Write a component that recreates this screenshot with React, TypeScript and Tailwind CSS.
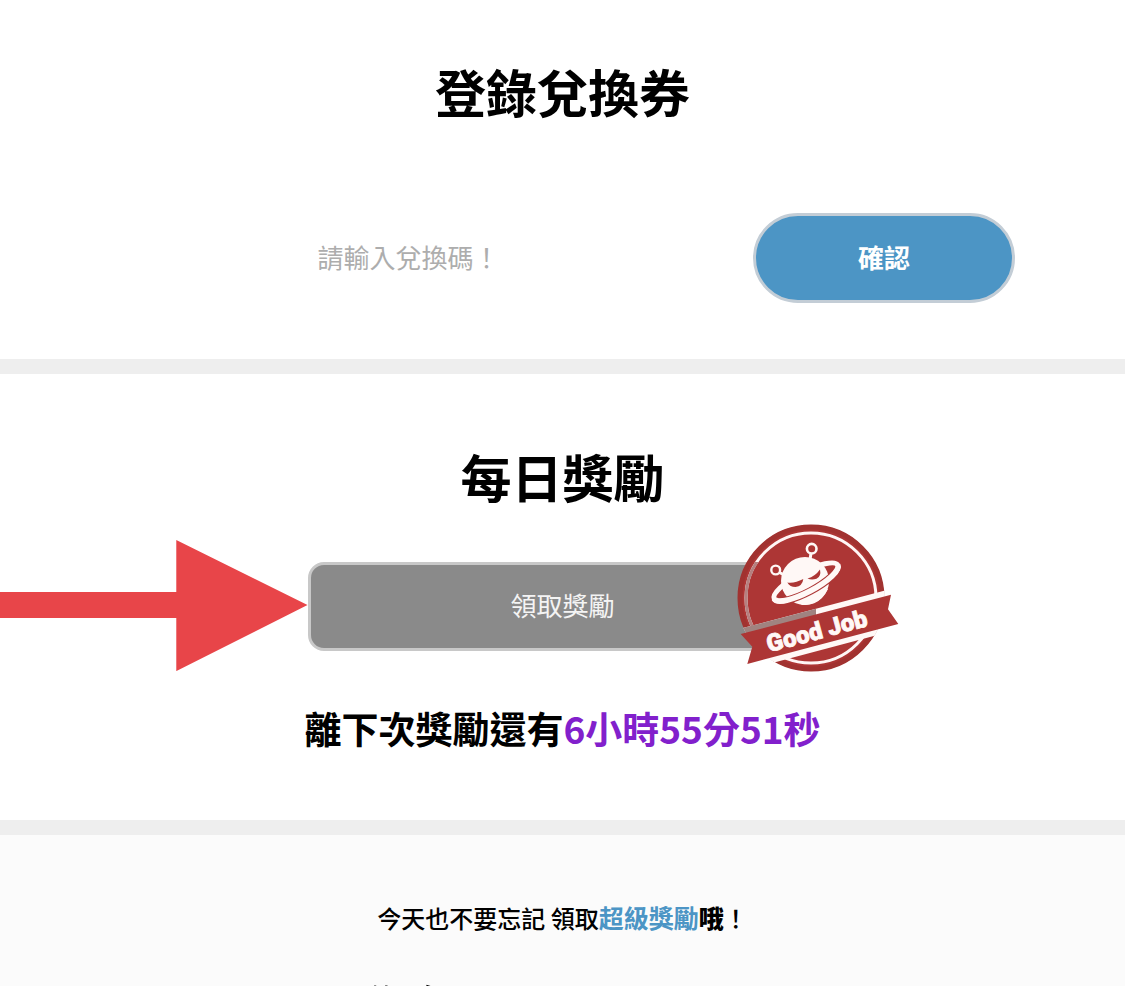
const heading = "text-[51px] leading-[76px] font-bold";

function ArrowMark() {
  return (
    <svg
      viewBox="0 0 307 132"
      preserveAspectRatio="xMaxYMid slice"
      className="h-[132px] w-full"
      fill="#e84549"
      aria-hidden="true"
    >
      <path d="M0 53H176V1L307 66L176 132V79H0Z" />
    </svg>
  );
}

function GoodJobBadge() {
  return (
    <svg
      viewBox="0 0 162 148"
      className="h-[148px] w-[162px]"
      role="img"
      aria-label="Good Job"
    >
      <defs>
        <clipPath id="disc">
          <circle cx="74" cy="74" r="74" />
        </clipPath>
        <clipPath id="overlap">
          <rect x="0" y="38" width="79" height="88" />
        </clipPath>
      </defs>
      <circle cx="74" cy="74" r="73" fill="#ad3635" />
      <circle cx="74" cy="74" r="71" fill="none" stroke="#a13230" strokeWidth="5" />
      <circle cx="74" cy="74" r="65" fill="none" stroke="#fff6f5" strokeWidth="3" />
      <g clipPath="url(#disc)">
        <path d="M0 105.6L162 62.8V105.4L0 148.3Z" fill="#fff8f6" />
        <g clipPath="url(#overlap)">
          <circle cx="74" cy="74" r="65" fill="none" stroke="#b58180" strokeWidth="3" />
          <path d="M0 105.6L162 62.8V75L0 118Z" fill="#a08380" />
        </g>
      </g>
      <path d="M3.7 110L154 70.7L151 85.3L161.3 100L10.3 140L15.3 122.7Z" fill="#ad3635" />

      {/* robot head with its ring */}
      <g stroke="#fff8f6" fill="none">
        <circle cx="38.7" cy="46" r="4.4" strokeWidth="2.4" />
        <circle cx="74.7" cy="24.7" r="4.8" strokeWidth="2.6" />
        <path d="M42.5 48.5L49 52M74 29L73 36" strokeWidth="3" />
        <ellipse
          cx="69"
          cy="58"
          rx="36"
          ry="10"
          strokeWidth="5"
          transform="rotate(-28 69 58)"
        />
      </g>
      <circle cx="68" cy="57" r="24" fill="#fff8f6" />
      <path d="M64 81Q82 82 91 65L80 62Z" fill="#fff8f6" />
      <path d="M50.3 58.5Q58 59.5 66.3 55Q65.5 62 58.5 63Q53 63 50.3 58.5Z" fill="#ad3635" />
      <path d="M70.5 54.5Q78 52.5 83 45.5Q84.5 52.5 79.5 54.8Q74.5 56.5 70.5 54.5Z" fill="#ad3635" />
      <g transform="rotate(-28 69 58)" fill="none">
        <path d="M44 65.2A36 10 0 0 0 94 65.2" stroke="#ad3635" strokeWidth="7.6" />
        <path d="M33 58A36 10 0 0 0 105 58" stroke="#fff8f6" strokeWidth="5.6" />
      </g>

      <text
        x="82"
        y="115"
        transform="rotate(-15 82 115)"
        textAnchor="middle"
        fill="#fff8f6"
        stroke="#fff8f6"
        strokeWidth="0.8"
        className="font-['Roboto',sans-serif] text-[24px] font-black"
      >
        Good Job
      </text>
    </svg>
  );
}

export default function App() {
  return (
    <main className="h-screen overflow-hidden bg-white font-['Noto_Sans_CJK_TC',sans-serif] text-black">
      <section className="border-b-[15px] border-[#eeeeee] px-[110px] pt-[53px] pb-14">
        <h2 className={`text-center ${heading}`}>登錄兌換券</h2>
        <form className="mt-[84px] flex items-center gap-[46px]">
          <input
            type="text"
            aria-label="兌換碼"
            placeholder="請輸入兌換碼！"
            className="h-[90px] min-w-0 flex-1 pb-1 text-center text-[26px] outline-none placeholder:text-[#adadad]"
          />
          <button
            type="button"
            className="h-[90px] w-[262px] rounded-full border-[3px] border-[#c3cdd6] bg-[#4c95c5] pb-1 text-[26px] font-bold text-white"
          >
            確認
          </button>
        </form>
      </section>

      <section className="border-b-[15px] border-[#eeeeee] pt-16 pb-[65px]">
        <h2 className={`text-center ${heading}`}>每日獎勵</h2>
        <div className="mt-12 grid grid-cols-[1fr_510px_1fr] items-center">
          <div className="-mt-7 -mb-6 overflow-hidden">
            <ArrowMark />
          </div>
          <div className="relative">
            <button
              type="button"
              className="block h-[89px] w-full rounded-2xl border-[3px] border-[#c8c8c8] bg-[#8a8a8a] pb-1 text-[26px] text-[#f4f4f4]"
            >
              領取獎勵
            </button>
            <div className="absolute -top-[38px] -right-[81px]">
              <GoodJobBadge />
            </div>
          </div>
        </div>
        <p className="mt-[50px] text-center text-[37px] leading-[54px] font-bold">
          離下次獎勵還有<span className="text-[#8220cc]">6小時55分51秒</span>
        </p>
      </section>

      <section className="h-96 bg-[#fbfbfb] pt-16">
        <p className="text-center text-[24px] leading-9 font-medium">
          今天也不要忘記 領取
          <a href="#super" className="text-[25px] font-bold text-[#4c95c5]">
            超級獎勵
          </a>
          <strong className="text-[25px] font-black">哦</strong>！
        </p>
        <h2 className={`mx-auto mt-[33px] w-[400px] ${heading}`}>你每日</h2>
      </section>
    </main>
  );
}
